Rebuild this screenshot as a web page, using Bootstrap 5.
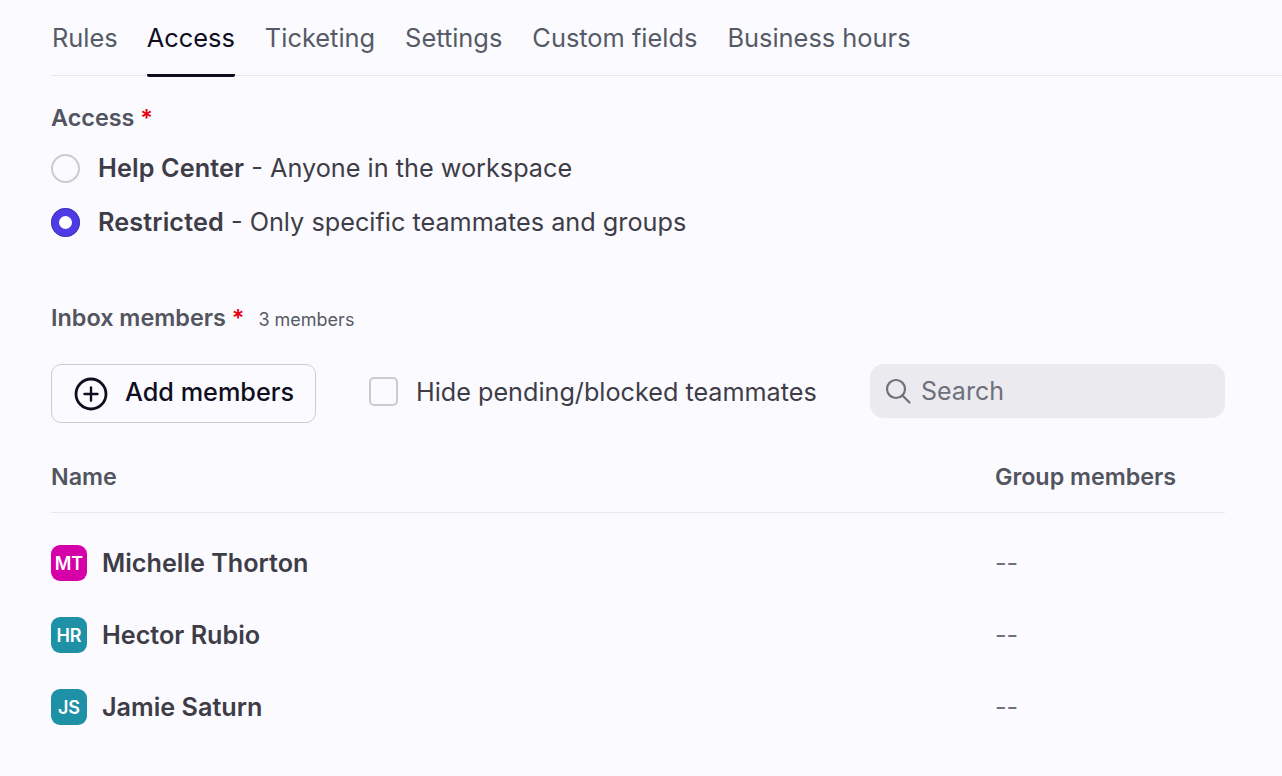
<!doctype html>
<html lang="en"><head><meta charset="utf-8"><title>Access</title>
<link href="https://cdn.jsdelivr.net/npm/bootstrap@5.3.0/dist/css/bootstrap.min.css" rel="stylesheet">
<style>
html,body{height:100%}
body{background:#fbfaff;font-family:Inter,"Liberation Sans",sans-serif;color:#3e3d47;overflow:hidden}
.shell{padding-left:51px}
.tabbar{height:76px;border-bottom:1px solid #e8e8ec;gap:30px}
.tabbar a{font-size:25.4px;line-height:76px;color:#565a66;text-decoration:none;height:77px;display:block}
.tabbar a:first-child{margin-left:1px;margin-right:-1px}
.tabbar a.on{color:#0f0e1f;border-bottom:3px solid #0f0e1f;border-radius:0 0 2px 2px}
.inner{width:1174px}
.lbl{font-size:23.4px;font-weight:600;color:#525560;line-height:30px}
.req{color:#e8000f}
.acc-label{margin-top:27px}
.optfirst{margin-top:9px}
.opt{height:54px;font-size:25.25px;gap:18px}
.dot{width:29px;height:29px;border-radius:50%;border:2px solid #cbcbd0;flex:none;margin-bottom:2px}
.dot.sel{background:#fff;border:8px solid #4f3ae8;outline:1px solid #3f3ab0;outline-offset:-1px}
.opt b{font-weight:600;letter-spacing:.1px}
.inbox{margin-top:53px}
.cnt{font-size:18px;color:#565a66;margin-left:14px;margin-top:2px}
.tools{margin-top:31px;height:59px}
.addb{width:265px;height:59px;border:1px solid #cbcbd0;border-radius:10px;background:transparent;font-size:25.25px;font-weight:500;color:#0f0e1f;gap:17px;padding:0 0 2px 22px}
.addb svg{margin-top:2px}
.chk{width:29px;height:29px;border:2px solid #cbcbd0;border-radius:5px;flex:none;margin-bottom:2px}
.hide{margin-left:53px;gap:18px;font-size:25.2px;color:#3e3d47;width:501px;margin-bottom:2px}
.srch{width:355px;height:54px;background:#ebebef;border-radius:14px;padding-left:15px;gap:10px;font-size:25px;color:#6e707c}
.srch span{margin-top:2px}
.thead{height:90px;padding-top:20px;border-bottom:1px solid #e8e8ec;font-size:23.3px;font-weight:600;color:#525560}
.c1{width:944px}
.rowm{height:72px;font-size:25.2px;font-weight:600}
.av{width:36px;height:36px;border-radius:9px;color:#fff;font-size:18px;font-weight:600;flex:none;margin-right:15px;margin-bottom:2px}
.dash{font-weight:400;color:#6e707c}
.first{margin-top:15px}
</style></head><body>
<div class="shell">
<nav class="tabbar d-flex"><a href="#">Rules</a><a href="#" class="on">Access</a><a href="#">Ticketing</a><a href="#">Settings</a><a href="#">Custom fields</a><a href="#">Business hours</a></nav>
<div class="inner">
<div class="lbl acc-label">Access <span class="req">*</span></div>
<div class="opt optfirst d-flex align-items-center"><span class="dot"></span><span><b>Help Center</b> - Anyone in the workspace</span></div>
<div class="opt d-flex align-items-center"><span class="dot sel"></span><span><b>Restricted</b> - Only specific teammates and groups</span></div>
<div class="d-flex align-items-center inbox"><span class="lbl">Inbox members <span class="req">*</span></span><span class="cnt">3 members</span></div>
<div class="tools d-flex align-items-center">
<button class="addb d-flex align-items-center" type="button"><svg width="34" height="34" viewBox="0 0 34 34" fill="none" stroke="#0f0e1f" stroke-width="2.8"><circle cx="17" cy="17" r="15"/><path d="M17 10.5v13M10.5 17h13" stroke-width="2.4" stroke-linecap="round"/></svg>Add members</button>
<div class="hide d-flex align-items-center"><span class="chk"></span><span>Hide pending/blocked teammates</span></div>
<div class="srch d-flex align-items-center align-self-start"><svg width="26" height="26" viewBox="0 0 26 26" fill="none" stroke="#6e707c" stroke-width="2.2"><circle cx="11" cy="11" r="9"/><path d="M17.5 17.5l7 7" stroke-linecap="round"/></svg><span>Search</span></div>
</div>
<div class="thead d-flex align-items-center"><span class="c1">Name</span><span>Group members</span></div>
<div class="first"></div>
<div class="rowm d-flex align-items-center"><div class="c1 d-flex align-items-center"><span class="av d-flex align-items-center justify-content-center" style="background:#d600a8">MT</span>Michelle Thorton</div><span class="dash">--</span></div>
<div class="rowm d-flex align-items-center"><div class="c1 d-flex align-items-center"><span class="av d-flex align-items-center justify-content-center" style="background:#1f91a6">HR</span>Hector Rubio</div><span class="dash">--</span></div>
<div class="rowm d-flex align-items-center"><div class="c1 d-flex align-items-center"><span class="av d-flex align-items-center justify-content-center" style="background:#1f91a6">JS</span>Jamie Saturn</div><span class="dash">--</span></div>
</div></div>
<script src="https://cdn.jsdelivr.net/npm/bootstrap@5.3.0/dist/js/bootstrap.bundle.min.js"></script>
</body></html>
